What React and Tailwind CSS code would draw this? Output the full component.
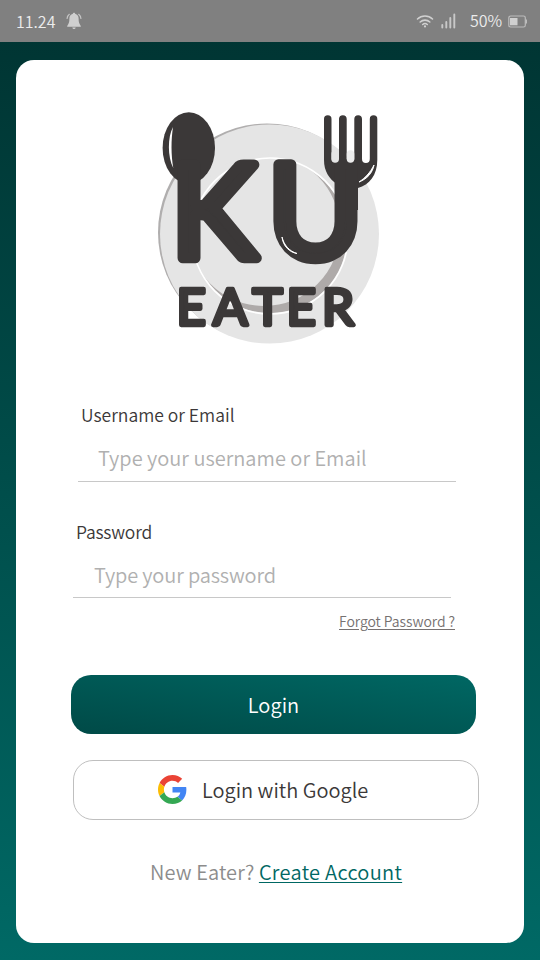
import React from 'react';

const font = "font-['Noto_Sans_CJK_SC','Noto_Sans',sans-serif] font-[350]";

function BellIcon() {
  return (
    <svg className="ml-[10px] h-[18px] w-4" viewBox="0 0 16 18" fill="#cfcfcf">
      <path d="M8 .7c.7 0 1.1.5 1.1 1.1 2.3.6 3.5 2.4 3.5 4.8 0 3.8.6 5.300 2.200 7.300v.8H1.200v-.8C2.800 11.900 3.400 10.400 3.400 6.600c0-2.400 1.200-4.200 3.500-4.800C6.900 1.200 7.300.7 8 .7Z" />
      <path d="M6.300 15.400h3.400c-.2 1-1 1.500-1.700 1.500s-1.500-.5-1.700-1.500Z" />
      <path d="M3.300 2.300C2 3.300 1.200 4.700 1.100 6.500M12.700 2.300c1.300 1 2.100 2.400 2.200 4.200" fill="none" stroke="#c4c4c4" strokeWidth="1.200" strokeLinecap="round" />
    </svg>
  );
}

function WifiIcon() {
  return (
    <svg className="h-[14px] w-[18px]" viewBox="0 0 18 14" fill="none" stroke="#d0d0d0" strokeWidth="1.600" strokeLinecap="round">
      <path d="M1.500 5a11 11 0 0 1 15 0M4.200 8a7 7 0 0 1 9.600 0M6.700 10.500a3.500 3.500 0 0 1 4.600 0" />
      <circle cx="9" cy="12.400" r="1.100" fill="#d0d0d0" stroke="none" />
    </svg>
  );
}

function SignalIcon() {
  return (
    <svg className="ml-[7px] h-4 w-[15px]" viewBox="0 0 15 16" stroke="#c8c8c8" strokeWidth="1.900" strokeLinecap="round">
      <path d="M1.300 12v2.500M5.300 9v5.500M9.300 5v9.500M13.300 1.500v13" />
    </svg>
  );
}

function BatteryIcon() {
  return (
    <svg className="ml-[5px] h-[13px] w-5" viewBox="0 0 20 13">
      <rect x=".8" y="1" width="16.500" height="11" rx="1.800" fill="none" stroke="#bcbcbc" strokeWidth="1.200" />
      <rect x="2" y="3" width="7.500" height="7.300" fill="#d0d0d0" />
      <path d="M18.300 4.500v4" stroke="#c4c4c4" strokeWidth="1.200" />
    </svg>
  );
}

function Logo() {
  return (
    <svg className="h-[240px] w-[230px]" viewBox="154 106 230 240">
      <circle cx="267" cy="232.500" r="109" fill="#b0aeae" />
      <circle cx="269.500" cy="234" r="109.500" fill="#e5e5e5" />
      <circle cx="270" cy="236" r="77" fill="#aeaaa9" />
      <circle cx="264" cy="230" r="76" fill="#e5e5e5" />
      <circle cx="270" cy="236" r="78" fill="none" stroke="#fff" strokeWidth="1.600" />
      <g fill="#3b3838">
        <ellipse cx="188.800" cy="148" rx="26.200" ry="35.800" />
        <path d="M178 176h22v82q0 5-11 5t-11-5Z" />
        <path d="M324 119a3.700 3.700 0 0 1 7.500 0v40a3.800 3.800 0 0 0 7.500 0v-40a3.800 3.800 0 0 1 7.700 0v40a3.800 3.800 0 0 0 7.600 0v-40a3.800 3.800 0 0 1 7.700 0v40a3.900 3.900 0 0 0 7.800 0v-40a3.700 3.700 0 0 1 7.500 0v41c0 15-8 25-19.300 28v22h-21v-26c-8-5-13-13-13-24Z" />
      </g>
      <path d="M173 127c-5.500 10-5.500 30 .3 41c-2.300-13-2.300-28-.3-41Z" fill="#fff" />
      <g fill="#3b3838" stroke="#3b3838" strokeLinejoin="round" fontFamily="Lato, 'Liberation Sans', sans-serif" fontWeight="400">
        <text y="258" fontSize="129" strokeWidth="10.500" x="171 268">KU</text>
        <text y="325" fontSize="51" strokeWidth="4.300" x="176.500 213 252.500 286.500 322">EATER</text>
      </g>
      <g fill="none" strokeWidth="7.500" strokeLinecap="round">
        <path d="M335.200 154v5" stroke="#e5e5e5" />
        <path d="M350.500 154v5" stroke="#ececec" />
      </g>
      <path d="M374 165c-1.500 8-7 14-15 17c6-4 11-9 15-17Z" fill="#fff" stroke="#fff" strokeWidth="1" />
      <path d="M282 237c2 8 7 14 15 16.500c-7-1-14-7-15-16.500Z" fill="#fff" stroke="#fff" strokeWidth="1" />
    </svg>
  );
}

function GoogleIcon() {
  return (
    <svg className="mb-0.5 h-[29px] w-[29px]" viewBox="0 0 48 48">
      <path fill="#EA4335" d="M24 9.500c3.540 0 6.710 1.220 9.210 3.600l6.850-6.850C35.900 2.380 30.470 0 24 0 14.620 0 6.510 5.380 2.560 13.220l7.980 6.190C12.430 13.720 17.740 9.500 24 9.500z" />
      <path fill="#4285F4" d="M46.980 24.550c0-1.570-.15-3.090-.38-4.550H24v9.020h12.940c-.58 2.960-2.260 5.480-4.780 7.180l7.730 6c4.510-4.180 7.090-10.360 7.090-17.650z" />
      <path fill="#FBBC05" d="M10.530 28.590c-.48-1.450-.76-2.990-.76-4.590s.27-3.140.76-4.590l-7.980-6.190C.92 16.460 0 20.120 0 24s.92 7.540 2.560 10.780l7.970-6.190z" />
      <path fill="#34A853" d="M24 48c6.480 0 11.930-2.130 15.890-5.810l-7.730-6c-2.150 1.450-4.920 2.300-8.160 2.300-6.260 0-11.570-4.220-13.470-9.910l-7.980 6.190C6.510 42.620 14.620 48 24 48z" />
    </svg>
  );
}

export default function App() {
  return (
    <div className={`flex h-[960px] w-[540px] flex-col overflow-hidden bg-linear-to-b from-[#003331] to-[#006965] whitespace-nowrap ${font}`}>
      <header className="flex h-[42px] shrink-0 items-center bg-[#808080] px-4">
        <span className="w-10 text-[16px] leading-[42px] text-[#ececec]">11.24</span>
        <BellIcon />
        <div className="ml-auto -mr-[4px] flex items-center">
          <WifiIcon />
          <SignalIcon />
          <span className="ml-[14px] w-[33px] pb-0.5 text-[16px] leading-[40px] text-[#ececec]">50%</span>
          <BatteryIcon />
        </div>
      </header>

      <main className="mx-4 mt-[18px] flex h-[883px] flex-col rounded-[18px] bg-white">
        <div className="pt-[46px] pl-[138px]">
          <Logo />
        </div>

        <form className="flex flex-col">
          <div className="mt-[55px] ml-[62px] flex w-[378px] flex-col">
            <label className="pl-[3px] text-[17.500px] leading-7 text-[#3b3838]">Username or Email</label>
            <div className="mt-[7px] h-[46px] border-b border-[#c8c8c8] pl-5 text-[20px] leading-[44px] text-[#b0b0b0]">Type your username or Email</div>
          </div>
          <div className="mt-[36px] ml-[57px] flex w-[378px] flex-col">
            <label className="pl-[3px] text-[17.500px] leading-7 tracking-[-0.2px] text-[#3b3838]">Password</label>
            <div className="mt-[7px] h-[45px] border-b border-[#c8c8c8] pl-[21px] text-[20px] leading-[44px] tracking-[-0.15px] text-[#b0b0b0]">Type your password</div>
          </div>
          <a className="mt-[11px] mr-[69px] self-end text-[14px] leading-6 tracking-[-0.05px] text-[#767171] underline underline-offset-2">Forgot Password ?</a>
          <button type="button" className="mt-[42px] ml-[55px] h-[59px] w-[405px] rounded-[20px] bg-linear-[8deg] from-[#004a47] to-[#006763] text-[20px] tracking-[0.1px] text-white">Login</button>
          <button type="button" className="mt-[26px] ml-[57px] flex h-[60px] w-[406px] items-center rounded-[20px] border border-[#bfbfbf] pl-[84px] text-[20px] text-[#3b3838]">
            <GoogleIcon />
            <span className="ml-[15px]">Login with Google</span>
          </button>
        </form>

        <p className="mt-[34px] pl-[134px] text-[20px] leading-9 tracking-[0.1px] text-[#8c8c8c]">
          New Eater? <a className="tracking-[0.3px] text-[#006763] underline decoration-1 underline-offset-2">Create Account</a>
        </p>
      </main>
    </div>
  );
}
